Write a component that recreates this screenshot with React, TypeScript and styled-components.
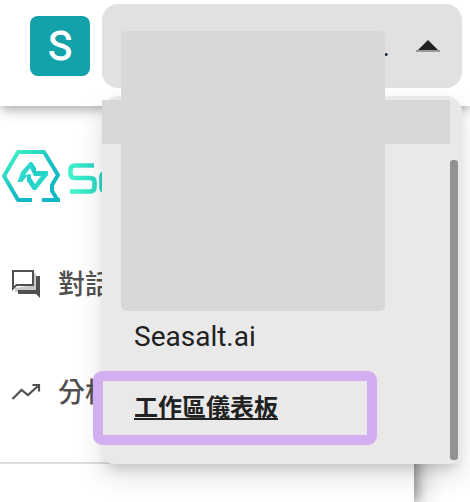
import React from "react";
import styled, { createGlobalStyle } from "styled-components";

const GlobalStyle = createGlobalStyle`
  * { box-sizing: border-box; }
  body { margin: 0; background: #fff; overflow: hidden; }
`;

const Page = styled.div`
  position: relative;
  width: 470px;
  height: 502px;
  overflow: hidden;
  display: flex;
  flex-direction: column;
  background: #fff;
  font-family: Roboto, "Noto Sans CJK TC", sans-serif;
  color: #212121;
`;

const Header = styled.header`
  position: relative;
  z-index: 1;
  flex: 0 0 106px;
  display: flex;
  align-items: flex-start;
  gap: 12px;
  padding: 4px 8px 0 30px;
  background: #fff;
  box-shadow: 0 4px 8px -2px rgba(0, 0, 0, 0.2), 0 8px 10px rgba(0, 0, 0, 0.11),
    0 2px 20px rgba(0, 0, 0, 0.05);
`;

const Avatar = styled.div`
  width: 60px;
  height: 60px;
  margin-top: 12px;
  border-radius: 8px;
  background: #13a2aa;
  color: #fff;
  display: flex;
  align-items: center;
  justify-content: center;
  font-size: 40px;
  font-weight: 400;
  line-height: 60px;
  padding-top: 1px;
  -webkit-text-stroke: 0.9px #fff;
`;

const Selector = styled.div`
  flex: 1;
  height: 84px;
  border-radius: 16px;
  background: #e1e1e1;
  display: flex;
  align-items: center;
  justify-content: flex-end;
  gap: 26px;
  padding-right: 22px;
  font-size: 28px;
`;

const SelectorText = styled.span`
  line-height: 32px;
  padding-top: 2px;
`;

const Sidebar = styled.aside`
  flex: 1;
  width: 414px;
  display: flex;
  flex-direction: column;
  background: #fff;
  box-shadow: 4px 0 10px rgba(0, 0, 0, 0.27), 6px 0 24px rgba(0, 0, 0, 0.28);
`;

const Brand = styled.div`
  height: 124px;
  padding-top: 42px;
`;

const NavItem = styled.div`
  height: 108px;
  display: flex;
  align-items: center;
  gap: 16px;
  padding-left: 10px;
  color: #505050;
  font-size: 27px;
  font-weight: 500;
  line-height: 40px;
  white-space: nowrap;
`;

const NavLabel = styled.span`
  padding-top: 2px;
`;

const NavList = styled.nav`
  height: 234px;
  border-bottom: 2px solid #ddd;
`;

const Menu = styled.div`
  position: absolute;
  z-index: 2;
  left: 102px;
  top: 96px;
  width: 360px;
  height: 368px;
  padding: 4px 12px 0 0;
  border-radius: 16px 16px 12px 12px;
  background: #e9e9e9;
  box-shadow: 0 10px 12px -6px rgba(0, 0, 0, 0.15),
    0 12px 24px 2px rgba(0, 0, 0, 0.11);
`;

const SelectedRow = styled.div`
  height: 44px;
  background: #d7d7d7;
`;

const Option = styled.div`
  margin-top: 167px;
  padding-left: 32px;
  height: 52px;
  font-size: 28px;
  line-height: 52px;
`;

const DashboardLink = styled.div`
  width: 284px;
  height: 74px;
  margin: 8px 0 0 -9px;
  padding-left: 31px;
  border: 10px solid #d2adef;
  border-radius: 9px;
  font-size: 24px;
  font-weight: 700;
  line-height: 54px;
  text-decoration: underline;
  text-decoration-thickness: 2px;
  text-underline-offset: 2px;
  text-decoration-skip-ink: none;
`;

const Scrollbar = styled.div`
  position: absolute;
  right: 4px;
  top: 64px;
  width: 8px;
  height: 300px;
  border-radius: 3px;
  background: #919191;
`;

const Redaction = styled.div`
  position: absolute;
  z-index: 3;
  left: 121px;
  top: 31px;
  width: 264px;
  height: 280px;
  border-radius: 5px;
  background: #d8d8d8;
`;

const Icon = styled.svg`
  flex: none;
  display: block;
`;

const BrandLogo = () => (
  <Icon width="140" height="56" viewBox="0 0 140 56" fill="none">
    <defs>
      <linearGradient id="mark" gradientUnits="userSpaceOnUse" x1="12" y1="2" x2="48" y2="48">
        <stop offset="0" stopColor="#43f5c5" />
        <stop offset="0.55" stopColor="#18bfc4" />
        <stop offset="1" stopColor="#11b8c4" />
      </linearGradient>
      <linearGradient id="inner" gradientUnits="userSpaceOnUse" x1="18" y1="18" x2="46" y2="34">
        <stop offset="0" stopColor="#3fe9cb" />
        <stop offset="0.5" stopColor="#20cdcb" />
        <stop offset="1" stopColor="#2fdcc8" />
      </linearGradient>
      <linearGradient id="word" gradientUnits="userSpaceOnUse" x1="70" y1="40" x2="112" y2="30">
        <stop offset="0" stopColor="#43f5c9" />
        <stop offset="1" stopColor="#20c8c6" />
      </linearGradient>
    </defs>
    <g stroke="url(#mark)" strokeWidth="4">
      <path d="M32 52H18L4 28L18 4H44L58 27L52 37V43L57 51" strokeLinejoin="round" />
      <path d="M42 52H60" />
    </g>
    <path
      d="M17.500 34L21 24L30 14H32L36 20V23H48V27L36 42H33L27 33V28L22 34ZM25 27L30.500 26L31 30L35 36L41 28H34L30 20Z"
      fill="url(#inner)"
      fillRule="evenodd"
    />
    <path
      d="M94 17.5H75Q70.500 17.500 70.500 22V25.500Q70.500 30 75 30H90Q94.500 30 94.500 34V39Q94.500 43.500 90 43.500H70M115 25H106Q101.500 25 101.500 29V39Q101.500 43.500 106 43.500H115"
      stroke="url(#word)"
      strokeWidth="4.6"
    />
  </Icon>
);

const ChatIcon = () => (
  <Icon width="32" height="32" viewBox="0 0 32 32">
    <path d="M25 8H30V30L26 26H8V22H25Z" fill="#505050" />
    <path d="M24 4L26 6V22H8V24H5V20L24 17Z" fill="#c8c8c8" />
    <path d="M3 3H23V17H6.500L3 20.500Z" fill="#fff" stroke="#505050" strokeWidth="2" />
  </Icon>
);

const TrendIcon = () => (
  <Icon width="32" height="32" viewBox="0 0 32 32" fill="none" stroke="#505050" strokeWidth="2.200">
    <path d="M2.500 23L11.500 14L18 19L28.500 9.500M22.500 9H29V15.500" />
  </Icon>
);

export default function App() {
  return (
    <Page>
      <GlobalStyle />
      <Header>
        <Avatar>S</Avatar>
        <Selector>
          <SelectorText>.</SelectorText>
          <Icon width="24" height="12" viewBox="0 0 24 12">
            <path d="M1 11L12 0L23 11Z" fill="#212121" />
            <path d="M0 10H24V12H0Z" fill="#999" />
          </Icon>
        </Selector>
      </Header>
      <Sidebar>
        <Brand>
          <BrandLogo />
        </Brand>
        <NavList>
          <NavItem>
            <ChatIcon />
            <NavLabel>對話</NavLabel>
          </NavItem>
          <NavItem>
            <TrendIcon />
            <NavLabel>分析</NavLabel>
          </NavItem>
        </NavList>
      </Sidebar>
      <Menu>
        <SelectedRow />
        <Option>Seasalt.ai</Option>
        <DashboardLink>工作區儀表板</DashboardLink>
        <Scrollbar />
      </Menu>
      <Redaction />
    </Page>
  );
}
